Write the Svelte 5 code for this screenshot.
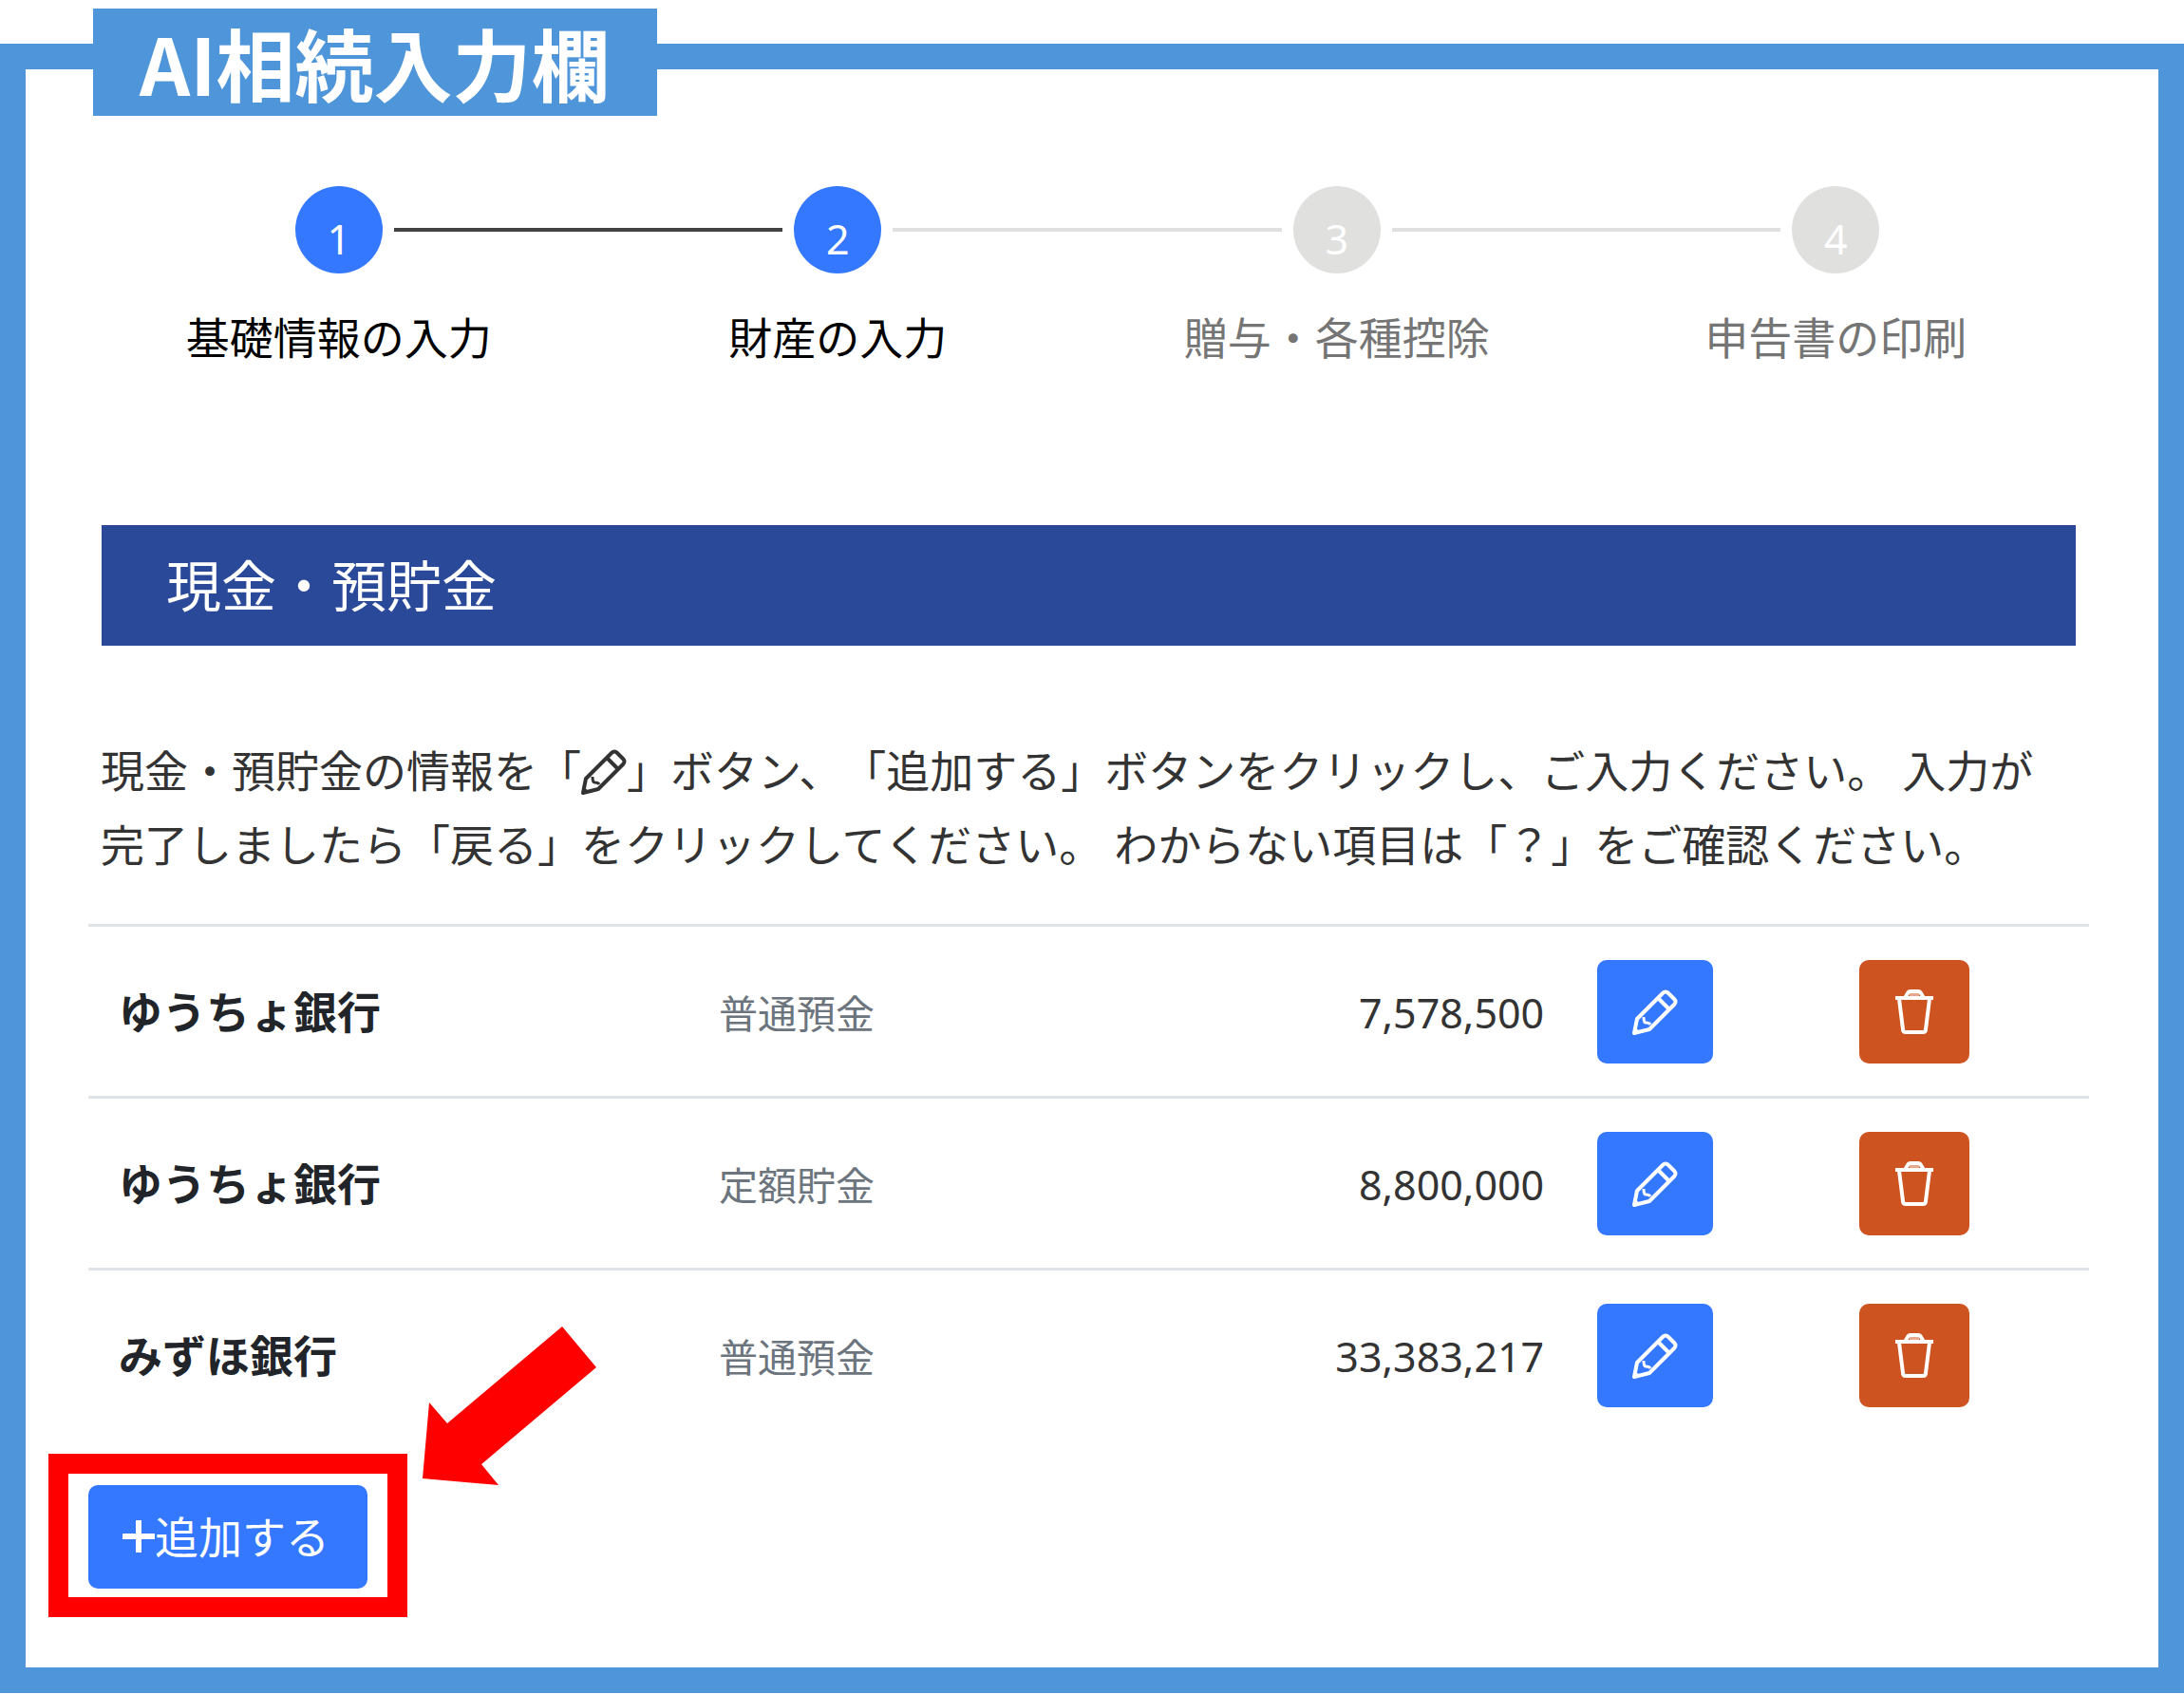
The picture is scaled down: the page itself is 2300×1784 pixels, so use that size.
<script>
	let steps = $state([
		{ label: '基礎情報の入力', done: true },
		{ label: '財産の入力', done: true },
		{ label: '贈与・各種控除', done: false },
		{ label: '申告書の印刷', done: false }
	]);

	let accounts = $state([
		{ bank: 'ゆうちょ銀行', type: '普通預金', amount: 7578500 },
		{ bank: 'ゆうちょ銀行', type: '定額貯金', amount: 8800000 },
		{ bank: 'みずほ銀行', type: '普通預金', amount: 33383217 }
	]);
</script>

{#snippet pencil()}
	<svg class="icon" viewBox="0 0 48 48" aria-hidden="true">
		<path d="M2 46 L5 31 L32 4 Q35 1 38 4 L44 10 Q47 13 44 16 L18 42 Z" />
		<path d="M27 9 L39 21" />
		<path class="notch" d="M12 29 Q12 35 14 35 Q18 35 19 37" />
		<path class="tip" d="M2 46 L3 41 L7 45 Z" />
	</svg>
{/snippet}

{#snippet trash()}
	<svg class="icon" viewBox="0 0 48 48" aria-hidden="true">
		<path d="M4 9 H44" />
		<path d="M14 9 L17 4 Q18 2 20 2 H28 Q30 2 31 4 L34 9" />
		<path d="M19 6 H29" opacity="0.5" />
		<path d="M8 10 L12 42 Q12 45 15 45 H33 Q36 45 36 42 L40 10" />
	</svg>
{/snippet}

<div class="page">
	<main class="frame">
		<h1>AI相続入力欄</h1>

		<ol class="steps">
			{#each steps as step, i}
				<li class:done={step.done}>
					<div class="marker">
						<span class="line" class:hidden={i === 0} class:dark={step.done}></span>
						<span class="circle">{i + 1}</span>
						<span
							class="line"
							class:hidden={i === steps.length - 1}
							class:dark={steps[i + 1]?.done}
						></span>
					</div>
					<span class="label">{step.label}</span>
				</li>
			{/each}
		</ol>

		<h2>現金・預貯金</h2>

		<p>
			現金・預貯金の情報を「{@render pencil()}」ボタン、「追加する」ボタンをクリックし、ご入力ください。
			入力が完了しましたら「戻る」をクリックしてください。 わからない項目は「？」をご確認ください。
		</p>

		<table>
			<tbody>
				{#each accounts as account}
					<tr>
						<th scope="row">{account.bank}</th>
						<td class="type">{account.type}</td>
						<td class="amount">{account.amount.toLocaleString('en-US')}</td>
						<td class="action edit">
							<button class="btn" aria-label="編集">{@render pencil()}</button>
						</td>
						<td class="action">
							<button class="btn delete" aria-label="削除">{@render trash()}</button>
						</td>
					</tr>
				{/each}
			</tbody>
		</table>

		<div class="add">
			<button class="btn">
				<svg class="plus" viewBox="0 0 34 34" aria-hidden="true">
					<path d="M17 0 V34 M0 17 H34" />
				</svg>追加する
			</button>
			<div class="highlight"></div>
			<svg class="arrow" viewBox="0 0 184 168" aria-hidden="true">
				<path d="M147 0 L183 43 L62 145 L80 167 L0 160 L7 80 L26 102 Z" />
			</svg>
		</div>
	</main>
</div>

<style>
	:global(body) {
		background: #fff;
	}

	.page {
		padding-top: 46px;
		font-family: 'Noto Sans', 'Noto Sans CJK JP', sans-serif;
		font-size: 46px;
		line-height: 78px;
		color: #333;
		text-spacing-trim: space-all;
	}

	.frame {
		position: relative;
		border: 27px solid #4e95d9;
		padding: 123px 73px 83px 66px;
	}

	/* title plate sits over the top border */
	h1 {
		position: absolute;
		top: -64px;
		left: 71px;
		margin: 0;
		padding: 0 49px;
		background: #4e95d9;
		color: #fff;
		font-family: 'Noto Sans CJK JP', sans-serif;
		font-size: 83px;
		font-weight: 700;
		line-height: 113px;
		white-space: nowrap;
	}

	.steps {
		display: grid;
		grid-template-columns: repeat(4, 1fr);
		margin: 0 4px 0 1px;
		padding: 0;
		list-style: none;
		text-align: center;
		color: #757575;
	}

	.steps .done {
		color: #000;
	}

	.marker {
		display: flex;
		align-items: center;
		gap: 12px;
		margin-bottom: 28px;
	}

	.line {
		flex: 1;
		height: 4px;
		background: #e0e0e0;
	}

	.line.dark {
		background: #424242;
	}

	.line.hidden {
		visibility: hidden;
	}

	.circle {
		box-sizing: border-box;
		width: 92px;
		height: 92px;
		padding-top: 20px;
		border-radius: 50%;
		background: #e0e0df;
		color: #fff;
		font-size: 43px;
		line-height: 72px;
	}

	.done .circle {
		background: #3478ff;
	}

	.label {
		display: block;
	}

	h2 {
		margin: 159px 14px 92px;
		padding: 0 68px;
		background: #2a4999;
		color: #fff;
		font-size: 58px;
		font-weight: 400;
		line-height: 127px;
	}

	p {
		margin: 0 40px 45px 13px;
	}

	.icon {
		width: 48px;
		height: 48px;
		fill: none;
		stroke: currentColor;
		stroke-width: 4;
		stroke-linejoin: round;
	}

	p .icon {
		vertical-align: -8px;
	}

	.notch {
		stroke-width: 3;
	}

	.tip {
		fill: currentColor;
		stroke-width: 2;
	}

	table {
		width: 100%;
		table-layout: fixed;
		border-collapse: collapse;
	}

	th,
	td {
		box-sizing: border-box;
		padding: 50px 0 0 32px;
		border-top: 3px solid #e0e4e8;
		text-align: left;
		vertical-align: baseline;
	}

	th {
		width: 30%;
		color: #212529;
		font-weight: 700;
	}

	td.type {
		color: #6c757d;
		font-size: 41px;
	}

	td.amount {
		padding-right: 26px;
		font-size: 43px;
		text-align: right;
	}

	td.action {
		width: 13%;
		padding: 35px 0 34px 32px;
		vertical-align: middle;
	}

	td.edit {
		padding-left: 30px;
	}

	.btn {
		display: flex;
		align-items: center;
		justify-content: center;
		height: 109px;
		padding: 0 37px;
		border: 0;
		border-radius: 10px;
		background: #3478ff;
		color: #fff;
		font: inherit;
		cursor: pointer;
	}

	.btn.delete {
		padding: 0 34px;
		background: #cd5320;
	}

	.add {
		position: relative;
		width: fit-content;
		margin-top: 48px;
	}

	.add .btn {
		padding: 0 40px 2px 36px;
	}

	.plus {
		width: 34px;
		height: 34px;
		fill: none;
		stroke: currentColor;
		stroke-width: 6;
	}

	/* callout drawn around the add button */
	.highlight {
		position: absolute;
		inset: -33px -42px -30px;
		border: 21px solid #f00;
		pointer-events: none;
	}

	.arrow {
		position: absolute;
		left: 352px;
		bottom: 108px;
		width: 184px;
		height: 168px;
		fill: #f00;
	}
</style>
